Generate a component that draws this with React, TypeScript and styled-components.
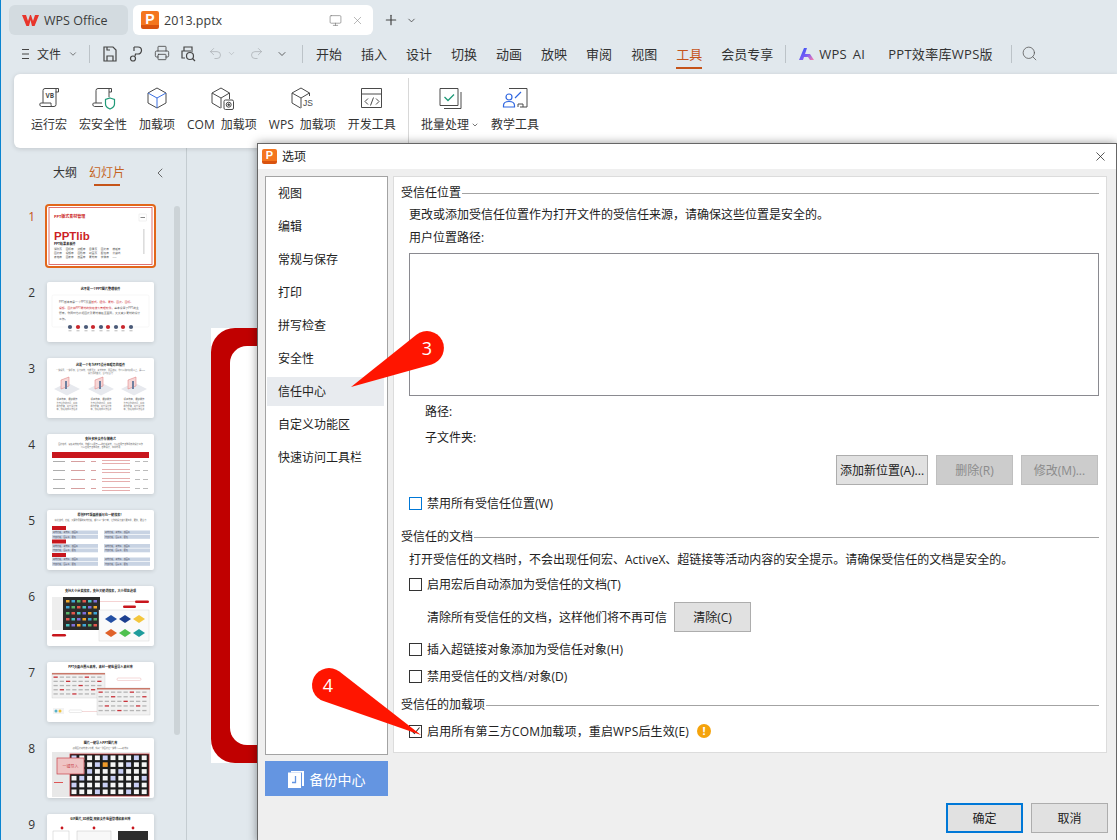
import React from 'react';
import styled, { createGlobalStyle } from 'styled-components';
import { ChevronDown, ChevronLeft, Monitor, Plus, Printer, Redo2, Search, Undo2, X } from 'lucide-react';

const GlobalStyle = createGlobalStyle`
  html, body {
    margin: 0;
    padding: 0;
    background: #e1e8ed;
  }
  body {
    font-family: "Open Sans", "Noto Sans CJK SC", sans-serif;
    color: #2b2b2b;
  }
`;

const Page = styled.div`
  position: relative;
  width: 1117px;
  height: 840px;
  box-sizing: border-box;
  overflow: hidden;
  border-left: 1px solid #0a84d0;
  background: #e1e8ed;
  display: flex;
  flex-direction: column;
`;

/* ---------- tabs ---------- */

const TabBar = styled.div`
  height: 36px;
  flex: none;
  box-sizing: border-box;
  padding: 5px 0 1px 8px;
  display: flex;
  align-items: stretch;
  color: #3b3b3b;
  font-size: 12.5px;
`;

const HomeTab = styled.div`
  width: 119px;
  box-sizing: border-box;
  padding-left: 13px;
  border-radius: 6px;
  background: #d3dbe0;
  display: flex;
  align-items: center;
  gap: 5px;
`;

const FileTab = styled.div`
  width: 240px;
  margin-left: 5px;
  box-sizing: border-box;
  padding: 0 9px 0 8px;
  border-radius: 6px;
  background: #fff;
  display: flex;
  align-items: center;
  gap: 5px;
`;

const FileName = styled.span`
  flex: 1;
`;

const PBadge = styled.span<{ $size: number }>`
  width: ${(p) => p.$size}px;
  height: ${(p) => p.$size}px;
  flex: none;
  border-radius: 2px;
  background: linear-gradient(#f4761f 80%, #d9530f 80%);
  color: #fff;
  font-weight: 700;
  font-size: ${(p) => p.$size - 4}px;
  line-height: ${(p) => p.$size - 2}px;
  text-align: center;
  font-family: "Liberation Sans", sans-serif;
`;

const TabActions = styled.div`
  display: flex;
  align-items: center;
  margin-left: 10px;
  gap: 7px;
  color: #444;
`;

/* ---------- menu row ---------- */

const MenuBar = styled.div`
  height: 35px;
  flex: none;
  margin-bottom: 3px;
  display: flex;
  align-items: center;
  font-size: 13px;
  color: #333;
`;

const Spaced = styled.div<{ $ml: number; $muted?: boolean }>`
  margin-left: ${(p) => p.$ml}px;
  display: flex;
  align-items: center;
  flex: none;
  color: ${(p) => (p.$muted ? '#a9afb3' : 'inherit')};
`;

const FileMenu = styled(Spaced)`
  font-size: 12px;
`;

const LatinMenu = styled(Spaced)`
  letter-spacing: 0.3px;
  word-spacing: 2px;
  white-space: pre;
`;

const Divider = styled.div<{ $ml: number }>`
  width: 1px;
  height: 18px;
  margin-left: ${(p) => p.$ml}px;
  flex: none;
  background: #bcc3c8;
`;

const QuickIcons = styled.div`
  margin-left: 12px;
  display: flex;
  gap: 10px;
  color: #3d3d3d;
`;

const MenuTabs = styled.div`
  margin-left: 13px;
  display: flex;
  gap: 19px;
`;

const MenuTab = styled.span<{ $active?: boolean }>`
  position: relative;
  color: ${(p) => (p.$active ? '#c5541a' : 'inherit')};
  font-size: 13px;
  &::after {
    content: '';
    display: ${(p) => (p.$active ? 'block' : 'none')};
    position: absolute;
    left: 0;
    right: 0;
    bottom: -6px;
    height: 2px;
    background: #c5541a;
  }
`;

/* ---------- ribbon ---------- */

const Ribbon = styled.div`
  height: 74px;
  flex: none;
  margin-left: 13px;
  box-sizing: border-box;
  padding: 0 0 0 17px;
  background: #fff;
  border-radius: 6px 0 0 6px;
  box-shadow: 0 1px 5px rgba(0, 0, 0, 0.14);
  display: flex;
  align-items: stretch;
  gap: 12px;
  position: relative;
  z-index: 1;
`;

const RibbonItem = styled.div`
  display: flex;
  flex-direction: column;
  align-items: center;
  padding-top: 12px;
  font-size: 12px;
  line-height: 16px;
  color: #333;
  white-space: nowrap;
`;

const RibbonLabel = styled.div`
  margin-top: 7px;
  display: flex;
  align-items: center;
  gap: 2px;
  word-spacing: 3px;
`;

const RibbonDivider = styled.div`
  width: 1px;
  margin: 4px 0 0 0;
  background: #d8d8d8;
`;

/* ---------- workspace ---------- */

const Workspace = styled.div`
  flex: 1;
  min-height: 0;
  display: flex;
`;

const SidePanel = styled.div`
  width: 186px;
  flex: none;
  box-sizing: border-box;
  border-right: 1px solid #c4ccd1;
  display: flex;
  flex-direction: column;
`;

const PanelHead = styled.div`
  height: 56px;
  flex: none;
  box-sizing: border-box;
  padding: 17px 0 0 52px;
  display: flex;
  align-items: flex-start;
  gap: 12px;
  font-size: 12px;
  line-height: 16px;
`;

const PanelTab = styled.span<{ $active?: boolean }>`
  position: relative;
  color: ${(p) => (p.$active ? '#c5641f' : '#333')};
  &::after {
    content: '';
    display: ${(p) => (p.$active ? 'block' : 'none')};
    position: absolute;
    left: 5px;
    right: 5px;
    bottom: -5px;
    height: 2px;
    background: #c5541a;
  }
`;

const Collapse = styled.span`
  margin-left: 15px;
  color: #555;
  display: flex;
  height: 16px;
  align-items: center;
`;

const PanelBody = styled.div`
  flex: 1;
  min-height: 0;
  display: flex;
`;

const ThumbList = styled.div`
  width: 173px;
  flex: none;
`;

const ThumbRow = styled.div`
  height: 76px;
  box-sizing: border-box;
  padding-top: 2px;
  display: grid;
  grid-template-columns: 46px 107px;
`;

const ThumbNumber = styled.div<{ $active?: boolean }>`
  padding: 4px 12px 0 0;
  text-align: right;
  font-size: 12px;
  line-height: 14px;
  color: ${(p) => (p.$active ? '#c5541a' : '#333')};
`;

const ThumbCard = styled.div<{ $active?: boolean }>`
  width: 107px;
  height: 60px;
  background: #fff;
  border-radius: 2px;
  overflow: hidden;
  box-shadow: ${(p) => (p.$active ? '0 0 0 2px #e2661a' : '0 1px 4px rgba(0, 0, 0, 0.14)')};
  svg {
    display: block;
  }
`;

const ScrollThumb = styled.div`
  width: 6px;
  height: 529px;
  margin-top: 2px;
  border-radius: 3px;
  background: #ccd3d7;
`;

const Canvas = styled.div`
  flex: 1;
  overflow: hidden;
  padding: 180px 0 0 24px;
`;

const SlideFrame = styled.div`
  width: 600px;
  height: 435px;
  box-sizing: border-box;
  background: #fff;
`;

const SlideRed = styled.div`
  height: 100%;
  box-sizing: border-box;
  padding: 18px 19px;
  border-radius: 24px;
  background: #c00000;
`;

const SlideInner = styled.div`
  height: 100%;
  border-radius: 17px;
  background: #fff;
`;

/* ---------- options dialog ---------- */

const Dialog = styled.div`
  position: absolute;
  left: 256px;
  top: 143px;
  width: 860px;
  height: 701px;
  box-sizing: border-box;
  z-index: 2;
  border: 1px solid #666;
  background: #efefef;
  box-shadow: 0 0 9px rgba(0, 0, 0, 0.4);
  display: flex;
  flex-direction: column;
  font-size: 12px;
  color: #222;
`;

const DialogTitle = styled.div`
  height: 25px;
  flex: none;
  box-sizing: border-box;
  padding: 0 8px 1px 4px;
  background: #fff;
  display: flex;
  align-items: center;
  gap: 5px;
  font-size: 12px;
`;

const DialogTitleText = styled.span`
  flex: 1;
`;

const DialogBody = styled.div`
  display: flex;
  gap: 5px;
  padding: 7px 9px 0 7px;
`;

const LeftColumn = styled.div`
  width: 123px;
  flex: none;
  display: flex;
  flex-direction: column;
  gap: 6px;
`;

const NavList = styled.div`
  height: 579px;
  box-sizing: border-box;
  padding: 2px 3px 0 1px;
  background: #fff;
  border: 1px solid #a3a3a3;
  display: flex;
  flex-direction: column;
  gap: 4px;
`;

const NavItem = styled.div<{ $active?: boolean }>`
  height: 29px;
  flex: none;
  padding-left: 11px;
  line-height: 29px;
  background: ${(p) => (p.$active ? '#e8ebef' : 'transparent')};
`;

const BackupButton = styled.div`
  height: 35px;
  background: #6495e1;
  color: #fff;
  font-size: 14px;
  display: flex;
  align-items: center;
  justify-content: center;
  gap: 6px;
`;

const MainPanel = styled.div`
  width: 714px;
  height: 577px;
  box-sizing: border-box;
  padding: 8px 7px 0;
  background: #fff;
  border: 1px solid #dcdcdc;
  display: flex;
  flex-direction: column;
`;

const SectionTitle = styled.div<{ $mt?: number }>`
  height: 16px;
  flex: none;
  margin-top: ${(p) => p.$mt ?? 0}px;
  line-height: 16px;
  display: flex;
  align-items: center;
  gap: 1px;
  &::after {
    content: '';
    flex: 1;
    height: 1px;
    background: #a3a3a3;
  }
`;

const TextRow = styled.div<{ $mt: number; $indent?: number }>`
  height: 16px;
  flex: none;
  margin-top: ${(p) => p.$mt}px;
  padding-left: ${(p) => p.$indent ?? 8}px;
  line-height: 16px;
  white-space: nowrap;
`;

const PathBox = styled.div`
  height: 143px;
  flex: none;
  margin: 7px 0 0 8px;
  box-sizing: border-box;
  border: 1px solid #8a8a90;
`;

const ButtonRow = styled.div`
  flex: none;
  margin-top: 9px;
  display: flex;
  justify-content: flex-end;
  gap: 8px;
  padding-right: 1px;
`;

const Button = styled.div<{ $width: number; $disabled?: boolean; $primary?: boolean }>`
  width: ${(p) => p.$width}px;
  height: 30px;
  flex: none;
  box-sizing: border-box;
  display: flex;
  align-items: center;
  justify-content: center;
  white-space: nowrap;
  background: ${(p) => (p.$disabled ? '#cccccc' : '#e1e1e1')};
  color: ${(p) => (p.$disabled ? '#8b8b8b' : '#222')};
  border: ${(p) => (p.$primary ? '2px solid #0078d7' : p.$disabled ? '1px solid #bfbfbf' : '1px solid #adadad')};
`;

const CheckRow = styled.div<{ $mt: number; $wide?: boolean }>`
  height: 16px;
  flex: none;
  margin-top: ${(p) => p.$mt}px;
  padding-left: 8px;
  display: flex;
  align-items: center;
  gap: 5px;
  white-space: nowrap;
  letter-spacing: ${(p) => (p.$wide ? '0.15px' : '0')};
`;

const CheckBox = styled.span<{ $focused?: boolean }>`
  width: 13px;
  height: 13px;
  flex: none;
  box-sizing: border-box;
  border: 1px solid ${(p) => (p.$focused ? '#0078d7' : '#333')};
  display: flex;
  align-items: center;
  justify-content: center;
`;

const ClearRow = styled.div`
  flex: none;
  margin-top: 10px;
  padding-left: 26px;
  display: flex;
  align-items: center;
  gap: 7px;
`;

const WarnDot = styled.span`
  width: 14px;
  height: 14px;
  margin-left: 3px;
  border-radius: 50%;
  background: #f5a30b;
  color: #fff;
  font-size: 11px;
  font-weight: 700;
  line-height: 14px;
  text-align: center;
`;

const DialogFooter = styled.div`
  margin-top: 7px;
  padding-right: 8px;
  display: flex;
  justify-content: flex-end;
  gap: 8px;
`;

const Pin = styled.svg<{ $left: number; $top: number }>`
  position: absolute;
  left: ${(p) => p.$left}px;
  top: ${(p) => p.$top}px;
  z-index: 3;
  overflow: visible;
`;

/* ---------- drawn icons ---------- */

const INK = '#454545';

const WpsLogo = () => (
  <svg width="17" height="13" viewBox="0 0 17 13">
    <path d="M0 1h4l2 6 2-6h1l2 6 2-6h4l-4.400 11h-2.600L8.500 6 7 12H4.400z" fill="#e8352b" />
  </svg>
);

const SaveIcon = () => (
  <svg width="16" height="18" viewBox="0 0 16 18" fill="none" stroke={INK} strokeWidth="1.200">
    <path d="M2 2h9l3 3v11H2zM5 16v-5h6v5M5 2v3h3" />
  </svg>
);

const BrushIcon = () => (
  <svg width="16" height="18" viewBox="0 0 16 18" fill="none" stroke={INK} strokeWidth="1.200">
    <path d="M6 2h4a3.500 3.500 0 0 1 0 7H7.500L7 11" />
    <circle cx="5" cy="13.500" r="2.500" />
    <path d="M6 2v4" />
  </svg>
);

const PreviewIcon = () => (
  <svg width="16" height="18" viewBox="0 0 16 18" fill="none" stroke={INK} strokeWidth="1.200">
    <path d="M4 6V2h8v3M5 13H2V6h11" />
    <circle cx="10" cy="11" r="3.500" />
    <path d="M12.500 13.500L15 16" />
  </svg>
);

const HamburgerIcon = () => (
  <svg width="10" height="12" viewBox="0 0 10 12" stroke={INK} strokeWidth="1.200">
    <path d="M2 1.500h7M2 6h7M2 10.500h7" />
  </svg>
);

const AiLogo = () => (
  <svg width="16" height="12" viewBox="0 0 16 12">
    <defs>
      <linearGradient id="aiGrad" x1="0" x2="1" y1="0" y2="1">
        <stop offset="0" stopColor="#2f55f5" />
        <stop offset="0.550" stopColor="#7a5cf5" />
        <stop offset="1" stopColor="#ff7fa8" />
      </linearGradient>
    </defs>
    <path d="M0 12L5 0h3l-2 6h5l4 6h-4l-2-3H5l-1 3z" fill="url(#aiGrad)" />
  </svg>
);

const IconBase = styled.svg`
  width: 26px;
  height: 24px;
  fill: none;
  stroke: #4a4a4a;
  stroke-width: 1;
`;

const CubeBody = ({ tone }: { tone?: string }) => (
  <>
    <path d="M12 2l9 5v10l-9 5-9-5V7z" />
    <path d="M3 7l9 5 9-5M12 12v10" stroke={tone ?? '#4a4a4a'} />
  </>
);

const MacroIcon = () => (
  <IconBase viewBox="0 0 26 24">
    <path d="M7 17V4.500A2 2 0 0 1 9 2.500h13M19.500 2.500h3v3.500h-3M20 3v15.500a2 2 0 0 1-2 2H5.500a2 2 0 0 1-1-3.500H15v1.500a2 2 0 0 0 2.500 2" />
    <text x="9.500" y="12" fontSize="6.500" fontWeight="700" fill="#4a4a4a" stroke="none">VB</text>
  </IconBase>
);

const ShieldIcon = () => (
  <IconBase viewBox="0 0 26 24">
    <path d="M6 17V4.500A2 2 0 0 1 8 2.500h13M18 2.500h3.500v3.500H19M19 3v8M13 20.500H4.500a2 2 0 0 1-1-3.500H12" />
    <path d="M20 12l4.500 1.500v4.500c0 2.500-2 4-4.500 5-2.500-1-4.500-2.500-4.500-5v-4.500z" stroke="#1f9a78" strokeWidth="1.200" fill="#fff" />
  </IconBase>
);

const AddinIcon = () => (
  <IconBase viewBox="0 0 24 24">
    <CubeBody tone="#3b6fe0" />
  </IconBase>
);

const ComIcon = () => (
  <IconBase viewBox="0 0 26 24">
    <path d="M12 2l8.500 5v6M11.500 22L3 17V7l9-5M3 7l9 5 8.500-5M12 12v10" />
    <rect x="15" y="14" width="9.500" height="9.500" rx="1.500" fill="#fff" />
    <circle cx="19.700" cy="18.700" r="2.500" />
    <circle cx="19.700" cy="18.700" r="0.900" fill="#4a4a4a" />
  </IconBase>
);

const JsIcon = () => (
  <IconBase viewBox="0 0 26 24">
    <path d="M12 2l8.500 5v3M11.500 22L3 17V7l9-5M3 7l9 5 8.500-5M12 12v10" />
    <text x="14" y="20" fontSize="8.500" fill="#4a4a4a" stroke="none" fontFamily="Liberation Sans">JS</text>
  </IconBase>
);

const DevIcon = () => (
  <IconBase viewBox="0 0 26 24">
    <path d="M2.500 2.500h20v19h-20zM2.500 8h20" />
    <path d="M9 12.500l-3 3 3 3M17 12.500l3 3-3 3M14.500 11.500l-3 8" />
  </IconBase>
);

const BatchIcon = () => (
  <IconBase viewBox="0 0 26 24">
    <path d="M3 2.500h18v17H3z" />
    <path d="M24 6v16.500H7" />
    <path d="M7.500 11l3.500 3.500 6-6" stroke="#1f9a78" strokeWidth="1.300" />
  </IconBase>
);

const TeachIcon = () => (
  <IconBase viewBox="0 0 26 24">
    <path d="M7 2.500h18v18.500h-7M16 21v-3h5v3" />
    <circle cx="7" cy="11" r="3" stroke="#2f66e0" strokeWidth="1.200" />
    <path d="M1.500 21v-1.500c0-2.500 2-4 5.500-4s5.500 1.500 5.500 4V21zM13 12l6-6" stroke="#2f66e0" strokeWidth="1.200" />
  </IconBase>
);

const BackupIcon = () => (
  <svg width="16" height="19" viewBox="0 0 16 19" fill="#fff">
    <path d="M3 2h13v15h-2V3.500H3z" />
    <path d="M0 3.500h13V19H0z" />
    <path d="M7.500 7v6.500H4" stroke="#6495e1" strokeWidth="1.300" fill="none" />
  </svg>
);

/* ---------- tiny slide thumbnails ---------- */

const range = (n: number) => Array.from({ length: n }, (_, i) => i);

const SlideSvg = ({ children }: { children: React.ReactNode }) => (
  <svg width="107" height="60" viewBox="0 0 107 60">
    {children}
  </svg>
);

const Heading = ({ y, children }: { y: number; children: React.ReactNode }) => (
  <text x="53.500" y={y} fontSize="3.100" fontWeight="700" textAnchor="middle" fill="#222">
    {children}
  </text>
);

const Tiny = ({ x, y, size = 2.300, c = '#555', center, children }: {
  x: number;
  y: number;
  size?: number;
  c?: string;
  center?: boolean;
  children: React.ReactNode;
}) => (
  <text x={x} y={y} fontSize={size} fill={c} textAnchor={center ? 'middle' : 'start'}>
    {children}
  </text>
);

const Line = ({ x, y, w, c = '#8e8e8e', h = 1 }: { x: number; y: number; w: number; c?: string; h?: number }) => (
  <rect x={x} y={y} width={w} height={h} fill={c} />
);

const COVER_WORDS = [
  ['消除页', '图标库', '边框库', '目录页', '图片库', '模板库'],
  ['图片库', '视频库', '图形库', '封面页', '配色库', '分割线'],
  ['表格库', '图表库', '版面库', '素材库', '字体库', '……'],
];

const SlideOne = () => (
  <SlideSvg>
    <rect x="2" y="1.500" width="103" height="57" fill="none" stroke="#d8504f" strokeWidth="0.800" />
    <text x="7" y="11.500" fontSize="4" fontWeight="700" fill="#cc1f26">PPT版式素材管理</text>
    <rect x="92" y="8" width="7.500" height="7" fill="#fff" stroke="#ddd" strokeWidth="0.400" />
    <Line x={93.500} y={11} w={4.500} c="#888" />
    <text x="7" y="33.500" fontSize="11.500" fontWeight="700" fill="#cc1f26" fontFamily="Liberation Sans">PPTlib</text>
    <text x="7" y="38.500" fontSize="3.200" fontWeight="700" fill="#222">PPT效果素板件</text>
    {COVER_WORDS.map((row, r) =>
      row.map((word, c) => (
        <Tiny key={`${r}${c}`} x={7 + c * 11.700} y={44 + r * 4} size={2.700} c="#444">
          {word}
        </Tiny>
      )),
    )}
    <Line x={96.500} y={23} w={0.800} c="#bbb" h={25} />
  </SlideSvg>
);

const SlideTwo = () => (
  <SlideSvg>
    <Heading y={8}>这不是一个PPT图片整理软件</Heading>
    <rect x="5" y="13" width="97" height="32" rx="1.500" fill="#fff" stroke="#efefef" strokeWidth="0.500" />
    <Tiny x={12} y={21} size={2.800}>
      PPT版本库是一个PPT页面<tspan fill="#cc2a30">版式、插件、素材、图片、图标、</tspan>
    </Tiny>
    <Tiny x={12} y={26.500} size={2.800}>
      <tspan fill="#cc2a30">视频、图片和PPT素材的快速搜索管理软件，</tspan>基本设置了PPT的主
    </Tiny>
    <Tiny x={12} y={32} size={2.800}>题库，你同时也会把图片及素材模板全面同，大大减少素材的设计</Tiny>
    <Tiny x={12} y={37.500} size={2.800}>工作。</Tiny>
    {[23, 31, 39, 46, 54, 61, 69, 76, 84].map((x, i) => (
      <g key={x}>
        <circle cx={x} cy={45} r="2.100" fill={i % 2 ? '#c9262c' : '#4a5a78'} />
        <Line x={x - 1.500} y={48.500} w={3} c="#999" h={0.700} />
      </g>
    ))}
  </SlideSvg>
);

const SlideThree = () => (
  <SlideSvg>
    <Heading y={8}>这是一个专为PPT设计而服务的插件</Heading>
    <Tiny x={53.500} y={12.500} size={2.100} c="#777" center>一键设置，一键添加，省力高效，功能强大，素材丰富，界面友好，你可以随时使用以上，是PPT</Tiny>
    <Tiny x={53.500} y={15.500} size={2.100} c="#777" center>设计师的首选，省时又省力</Tiny>
    {[20, 54, 87].map((x) => (
      <g key={x}>
        <path d={`M${x - 13} 31l13-6.500 13 6.500-13 6.500z`} fill="#e7e9ee" />
        <path d={`M${x - 6} 31v-9l8-3v9z`} fill="#f6d6d6" stroke="#dd7777" strokeWidth="0.500" />
        <rect x={x - 2} y="23" width="2" height="8" fill="#6f7f9f" />
        <Tiny x={x} y={42} size={2.300} c="#555" center>提高效率，便捷操作</Tiny>
        <Tiny x={x} y={45.500} size={2.100} c="#777" center>为节省你的时间，精简</Tiny>
        <Tiny x={x} y={48.500} size={2.100} c="#777" center>操作步骤，提升设计效</Tiny>
        <Tiny x={x} y={51.500} size={2.100} c="#777" center>率，快速完成工作任务</Tiny>
      </g>
    ))}
  </SlideSvg>
);

const SlideFour = () => (
  <SlideSvg>
    <Heading y={6}>支持多种文件存储格式</Heading>
    <Tiny x={53.500} y={11} size={2.100} c="#666" center>图片格式、视频素材格式等，你都可以用于PPT的模板素材，可以应用于各种场景的设计工作</Tiny>
    <Tiny x={53.500} y={14} size={2.100} c="#666" center>可以应用于各种场景，各种设计，简单易用</Tiny>
    <rect x="5" y="18" width="97" height="6" fill="#c8161d" />
    {range(4).map((r) => (
      <g key={r}>
        <Line x={6} y={27 + r * 9} w={12} c="#999" h={0.800} />
        <Line x={24} y={27 + r * 9} w={14} c="#cc8888" h={0.800} />
        <Line x={44} y={27 + r * 9} w={5} c="#d08a8a" h={0.800} />
        <Line x={55} y={26 + r * 9} w={28} c="#e09a9a" h={0.800} />
        <Line x={55} y={29 + r * 9} w={28} c="#e09a9a" h={0.800} />
        <Line x={88} y={27 + r * 9} w={5} c="#aaa" h={0.800} />
        <Line x={96} y={27 + r * 9} w={5} c="#aaa" h={0.800} />
      </g>
    ))}
  </SlideSvg>
);

const SlideFive = () => (
  <SlideSvg>
    <Heading y={5.500}>原创PPT版面模板尽在一键搜索！</Heading>
    <Tiny x={53.500} y={11} size={2.100} c="#666" center>精选版式，模板，只要你需要的素材模板，都可以一键下载，让你的设计变得更简单，更快，更省力</Tiny>
    {[16, 29.500, 43].map((y) => (
      <g key={y}>
        <rect x="5" y={y} width="14" height="4" fill="#c8161d" />
        {[5, 57].map((x) => (
          <g key={x}>
            <rect x={x} y={y + 4.500} width="46" height="3.800" fill="#c8d3e3" />
            <rect x={x} y={y + 9} width="46" height="3.800" fill="#c8d3e3" />
            <Tiny x={x + 1} y={y + 7.200} size={2.100} c="#445">素材模板，素材库，版面库</Tiny>
            <Tiny x={x + 1} y={y + 11.700} size={2.100} c="#445">内容模板，图表库，配色</Tiny>
          </g>
        ))}
      </g>
    ))}
  </SlideSvg>
);

const SlideSix = () => (
  <SlideSvg>
    <Heading y={5.500}>支持大小分类搜索，支持关键词搜索，大小预览选项</Heading>
    <rect x="5" y="11" width="12" height="33" fill="#eee" />
    <rect x="16" y="11" width="37" height="33" fill="#2b2b2b" />
    {range(5).map((r) =>
      range(6).map((c) => (
        <rect
          key={`${r}${c}`}
          x={19 + c * 5.500}
          y={14 + r * 6}
          width="3.500"
          height="2.500"
          fill={['#f0a92c', '#3fa7d6', '#58b368', '#e2574c', '#49c2c2', '#7d6fd8'][(r + c) % 6]}
        />
      )),
    )}
    <rect x="52" y="24" width="50" height="31" fill="#fafafa" stroke="#ccc" strokeWidth="0.400" />
    {[
      [64, 33, '#234fa3'],
      [78, 33, '#1d3f8f'],
      [92, 33, '#f4c63d'],
      [64, 47, '#e0622a'],
      [78, 47, '#4fc04f'],
      [92, 47, '#1f9c9c'],
    ].map(([x, y, c]) => (
      <path key={`${x}${y}`} d={`M${x} ${Number(y) - 4}l6 4-6 4-6-4z`} fill={c as string} />
    ))}
    <rect x="88" y="14.500" width="14" height="2.500" rx="1.200" fill="#c8161d" />
    <rect x="76" y="19.500" width="13" height="2.500" rx="1.200" fill="#c8161d" />
    <rect x="5" y="48" width="14" height="2.500" rx="1.200" fill="#c8161d" />
    <Line x={53} y={15.500} w={35} c="#eba6a6" h={0.500} />
  </SlideSvg>
);

const TinyTable = ({ x, y, w, h }: { x: number; y: number; w: number; h: number }) => (
  <g>
    <rect x={x} y={y} width={w} height={h} fill="#f1f1f1" stroke="#bbb" strokeWidth="0.300" />
    <rect x={x} y={y} width={w} height="1.500" fill="#c9796a" />
    {range(5).map((r) =>
      range(8).map((c) => (
        <rect
          key={`${r}${c}`}
          x={x + 1.500 + (c * (w - 3)) / 8}
          y={y + 3.500 + (r * (h - 4)) / 5}
          width={(w - 3) / 8 - 2}
          height="1.300"
          fill={(r * 3 + c) % 5 === 0 ? '#c8323a' : '#b5b5b5'}
        />
      )),
    )}
  </g>
);

const SlideSeven = () => (
  <SlideSvg>
    <Heading y={5.500}>PPT页面内置元素库，素材一键批量导入素材库</Heading>
    <TinyTable x={5} y={11} w={53} h={25} />
    <rect x="70" y="16" width="24" height="2.500" rx="1.200" fill="#fff" stroke="#e3a0a0" strokeWidth="0.400" />
    <TinyTable x={50} y={26} w={53} h={27} />
    <rect x="6" y="46" width="11" height="6" fill="#f3f3f3" />
    <circle cx="9" cy="49" r="1.500" fill="#58b3c9" />
    <circle cx="13" cy="49" r="1.500" fill="#f0c23c" />
    <rect x="22" y="48" width="13" height="2.500" rx="1.200" fill="#fff" stroke="#ccc" strokeWidth="0.400" />
    <Line x={35} y={49} w={15} c="#e3a0a0" h={0.400} />
  </SlideSvg>
);

const SlideEight = () => (
  <SlideSvg>
    <Heading y={5.500}>图片一键导入PPT图片库</Heading>
    <Tiny x={53.500} y={10.500} size={2.100} c="#666" center>使用图片素材搜索功能，找到一张图片后一键导入PPT素材库</Tiny>
    <rect x="5" y="14" width="98" height="45" fill="#e8e8e8" />
    <rect x="23" y="16" width="79" height="42" fill="#1d1d1d" stroke="#c8262c" strokeWidth="0.700" />
    {range(6).map((r) =>
      range(10).map((c) => (
        <rect
          key={`${r}${c}`}
          x={24.500 + c * 7.800}
          y={17.500 + r * 6.800}
          width="5"
          height="4.600"
          fill={r === 1 && c === 4 ? '#ef9a2a' : (r + c) % 4 === 0 ? '#c9cff5' : '#f5f5f5'}
        />
      )),
    )}
    <rect x="10" y="20" width="27" height="16" fill="#efc4c4" stroke="#c9434a" strokeWidth="0.700" />
    <Tiny x={23.500} y={29.500} size={4} c="#c9434a" center>一键导入</Tiny>
    <Line x={7} y={44} w={9} c="#d55" h={1} />
  </SlideSvg>
);

const SlideNine = () => (
  <SlideSvg>
    <Heading y={5.500}>GIF图片,3D模型,视频文件批量管理和素材库</Heading>
    {[15, 47, 86].map((x) => (
      <circle key={x} cx={x} cy="14" r="1.400" fill="#c8161d" />
    ))}
    <rect x="6" y="17" width="16" height="20" fill="#fff" stroke="#bbb" strokeWidth="0.400" />
    <rect x="30" y="17" width="34" height="20" fill="#f8f8f8" stroke="#bbb" strokeWidth="0.400" />
    <rect x="71" y="17" width="30" height="20" fill="#2e2e2e" />
  </SlideSvg>
);

const SLIDES = [SlideOne, SlideTwo, SlideThree, SlideFour, SlideFive, SlideSix, SlideSeven, SlideEight, SlideNine];

const RIBBON = [
  { label: 'COM 加载项', icon: <ComIcon /> },
  { label: 'WPS 加载项', icon: <JsIcon /> },
  { label: '开发工具', icon: <DevIcon /> },
];

const MENU_TABS = ['开始', '插入', '设计', '切换', '动画', '放映', '审阅', '视图'];

const NAV_ITEMS = ['视图', '编辑', '常规与保存', '打印', '拼写检查', '安全性', '信任中心', '自定义功能区', '快速访问工具栏'];

const App = () => (
  <Page>
    <GlobalStyle />
    <TabBar>
      <HomeTab>
        <WpsLogo />
        WPS Office
      </HomeTab>
      <FileTab>
        <PBadge $size={18}>P</PBadge>
        <FileName>2013.pptx</FileName>
        <Monitor size={13} strokeWidth={1.2} color="#777" />
        <Spaced $ml={4}>
          <X size={13} strokeWidth={1.1} color="#888" />
        </Spaced>
      </FileTab>
      <TabActions>
        <Plus size={16} strokeWidth={1.8} />
        <ChevronDown size={11} strokeWidth={1.8} />
      </TabActions>
    </TabBar>

    <MenuBar>
      <Spaced $ml={19}>
        <HamburgerIcon />
      </Spaced>
      <FileMenu $ml={7}>文件</FileMenu>
      <Spaced $ml={7}>
        <ChevronDown size={10} strokeWidth={1.5} />
      </Spaced>
      <Divider $ml={11} />
      <QuickIcons>
        <SaveIcon />
        <BrushIcon />
        <Printer size={16} strokeWidth={1.2} />
        <PreviewIcon />
      </QuickIcons>
      <Spaced $ml={12} $muted>
        <Undo2 size={15} strokeWidth={1.2} />
      </Spaced>
      <Spaced $ml={4} $muted>
        <ChevronDown size={9} strokeWidth={1.5} />
      </Spaced>
      <Spaced $ml={13} $muted>
        <Redo2 size={15} strokeWidth={1.2} />
      </Spaced>
      <Spaced $ml={12}>
        <ChevronDown size={12} strokeWidth={1.5} />
      </Spaced>
      <Divider $ml={14} />
      <MenuTabs>
        {MENU_TABS.map((t) => (
          <MenuTab key={t}>{t}</MenuTab>
        ))}
        <MenuTab $active>工具</MenuTab>
        <MenuTab>会员专享</MenuTab>
      </MenuTabs>
      <Divider $ml={12} />
      <Spaced $ml={13}>
        <AiLogo />
      </Spaced>
      <LatinMenu $ml={4}>WPS AI</LatinMenu>
      <LatinMenu $ml={23}>PPT效率库WPS版</LatinMenu>
      <Divider $ml={18} />
      <Spaced $ml={9}>
        <Search size={17} strokeWidth={1.1} color="#555" />
      </Spaced>
    </MenuBar>

    <Ribbon>
      <RibbonItem>
        <MacroIcon />
        <RibbonLabel>运行宏</RibbonLabel>
      </RibbonItem>
      <RibbonItem>
        <ShieldIcon />
        <RibbonLabel>宏安全性</RibbonLabel>
      </RibbonItem>
      <RibbonItem>
        <AddinIcon />
        <RibbonLabel>加载项</RibbonLabel>
      </RibbonItem>
      {RIBBON.map((r) => (
        <RibbonItem key={r.label}>
          {r.icon}
          <RibbonLabel>{r.label}</RibbonLabel>
        </RibbonItem>
      ))}
      <RibbonDivider />
      <RibbonItem>
        <BatchIcon />
        <RibbonLabel>
          批量处理
          <ChevronDown size={8} strokeWidth={2} />
        </RibbonLabel>
      </RibbonItem>
      <RibbonItem>
        <TeachIcon />
        <RibbonLabel>教学工具</RibbonLabel>
      </RibbonItem>
    </Ribbon>

    <Workspace>
      <SidePanel>
        <PanelHead>
          <PanelTab>大纲</PanelTab>
          <PanelTab $active>幻灯片</PanelTab>
          <Collapse>
            <ChevronLeft size={16} strokeWidth={1.3} />
          </Collapse>
        </PanelHead>
        <PanelBody>
          <ThumbList>
            {SLIDES.map((Slide, i) => (
              <ThumbRow key={i}>
                <ThumbNumber $active={i === 0}>{i + 1}</ThumbNumber>
                <ThumbCard $active={i === 0}>
                  <Slide />
                </ThumbCard>
              </ThumbRow>
            ))}
          </ThumbList>
          <ScrollThumb />
        </PanelBody>
      </SidePanel>
      <Canvas>
        <SlideFrame>
          <SlideRed>
            <SlideInner />
          </SlideRed>
        </SlideFrame>
      </Canvas>
    </Workspace>

    <Dialog>
      <DialogTitle>
        <PBadge $size={15}>P</PBadge>
        <DialogTitleText>选项</DialogTitleText>
        <X size={15} strokeWidth={1.2} color="#222" />
      </DialogTitle>
      <DialogBody>
        <LeftColumn>
          <NavList>
            {NAV_ITEMS.map((n) => (
              <NavItem key={n} $active={n === '信任中心'}>
                {n}
              </NavItem>
            ))}
          </NavList>
          <BackupButton>
            <BackupIcon />
            备份中心
          </BackupButton>
        </LeftColumn>
        <MainPanel>
          <SectionTitle>受信任位置</SectionTitle>
          <TextRow $mt={6}>更改或添加受信任位置作为打开文件的受信任来源，请确保这些位置是安全的。</TextRow>
          <TextRow $mt={7}>用户位置路径:</TextRow>
          <PathBox />
          <TextRow $mt={8} $indent={24}>
            路径:
          </TextRow>
          <TextRow $mt={10} $indent={24}>
            子文件夹:
          </TextRow>
          <ButtonRow>
            <Button $width={92}>添加新位置(A)...</Button>
            <Button $width={77} $disabled>
              删除(R)
            </Button>
            <Button $width={77} $disabled>
              修改(M)...
            </Button>
          </ButtonRow>
          <CheckRow $mt={10}>
            <CheckBox $focused />
            禁用所有受信任位置(W)
          </CheckRow>

          <SectionTitle $mt={18}>受信任的文档</SectionTitle>
          <TextRow $mt={7}>
            打开受信任的文档时，不会出现任何宏、ActiveX、超链接等活动内容的安全提示。请确保受信任的文档是安全的。
          </TextRow>
          <CheckRow $mt={8}>
            <CheckBox />
            启用宏后自动添加为受信任的文档(T)
          </CheckRow>
          <ClearRow>
            清除所有受信任的文档，这样他们将不再可信
            <Button $width={77}>清除(C)</Button>
          </ClearRow>
          <CheckRow $mt={9}>
            <CheckBox />
            插入超链接对象添加为受信任对象(H)
          </CheckRow>
          <CheckRow $mt={11}>
            <CheckBox />
            禁用受信任的文档/对象(D)
          </CheckRow>

          <SectionTitle $mt={13}>受信任的加载项</SectionTitle>
          <CheckRow $mt={10} $wide>
            <CheckBox>
              <svg width="9" height="8" viewBox="0 0 9 8" fill="none" stroke="#333" strokeWidth="1.100">
                <path d="M0.500 3.500l3 3 5-6" />
              </svg>
            </CheckBox>
            启用所有第三方COM加载项，重启WPS后生效(E)
            <WarnDot>!</WarnDot>
          </CheckRow>
        </MainPanel>
      </DialogBody>
      <DialogFooter>
        <Button $width={77} $primary>
          确定
        </Button>
        <Button $width={77}>取消</Button>
      </DialogFooter>
    </Dialog>

    <Pin $left={349} $top={330} width="97" height="60" viewBox="350 330 97 60">
      <path d="M351 387L416.400 334.700A17 17 0 1 1 431.600 364.400Z" fill="#ff1500" />
      <text x="427" y="354.500" fontSize="18" fill="#fff" textAnchor="middle">
        3
      </text>
    </Pin>
    <Pin $left={310} $top={667} width="113" height="70" viewBox="311 667 113 70">
      <path d="M421 735L323.400 701.100A17 17 0 1 1 339.400 671.600Z" fill="#ff1500" />
      <text x="328" y="691.500" fontSize="18" fill="#fff" textAnchor="middle">
        4
      </text>
    </Pin>
  </Page>
);

export default App;
